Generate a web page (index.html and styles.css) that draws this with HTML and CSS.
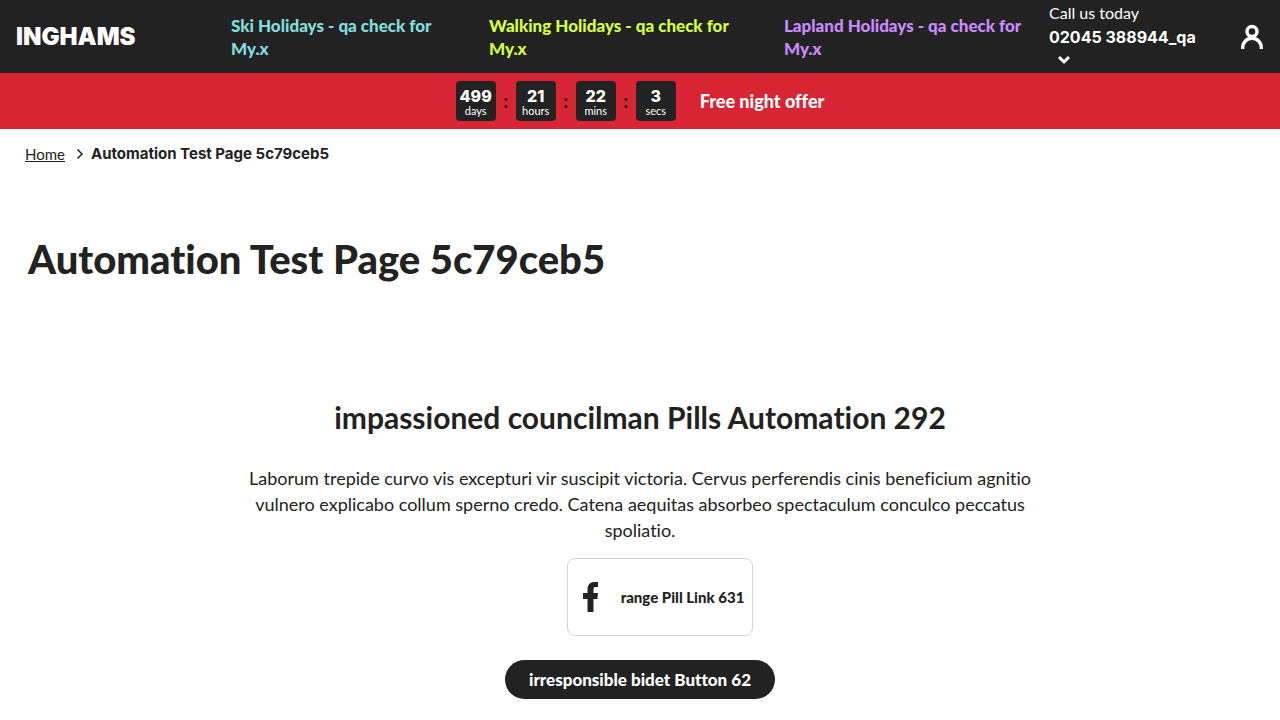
FILE: index.html
```html
<!DOCTYPE html>
<html lang="en">
<head>
<meta charset="utf-8">
<meta name="viewport" content="width=device-width, initial-scale=1">
<title>Automation Test Page 5c79ceb5</title>
<link rel="stylesheet" href="styles.css">
</head>
<body>
<header class="header">
  <a class="logo" href="#">INGHAMS</a>
  <nav class="nav" aria-label="Main">
    <a class="nav-link ski" href="#">Ski Holidays - qa check for My.x</a>
    <a class="nav-link walking" href="#">Walking Holidays - qa check for My.x</a>
    <a class="nav-link lapland" href="#">Lapland Holidays - qa check for My.x</a>
  </nav>
  <div class="contact">
    <span>Call us today</span>
    <button class="phone" type="button">02045 388944_qa
      <svg class="chevron" viewBox="0 0 14 10" aria-hidden="true"><path d="M2 2l5 5 5-5" fill="none" stroke="currentColor" stroke-width="3"/></svg>
    </button>
  </div>
  <button class="account" type="button" aria-label="Account">
    <svg viewBox="0 0 24 26" aria-hidden="true"><g fill="none" stroke="currentColor" stroke-width="3.4"><circle cx="12" cy="7.5" r="5"/><path d="M2.7 25v-1.5a9.3 9.3 0 0 1 18.6 0V25"/></g></svg>
  </button>
</header>
<section class="offer" aria-label="Offer countdown">
  <div class="timer">
    <div class="unit"><strong>499</strong><span>days</span></div><b class="colon">:</b>
    <div class="unit"><strong>21</strong><span>hours</span></div><b class="colon">:</b>
    <div class="unit"><strong>22</strong><span>mins</span></div><b class="colon">:</b>
    <div class="unit"><strong>3</strong><span>secs</span></div>
  </div>
  <strong class="offer-text">Free night offer</strong>
</section>
<main>
  <nav class="crumbs" aria-label="Breadcrumb">
    <a class="crumb-home" href="#">Home</a>
    <svg class="crumb-arrow" viewBox="0 0 8 12" aria-hidden="true"><path d="M1.500 1.500L6 6l-4.500 4.500" fill="none" stroke="currentColor" stroke-width="1.5"/></svg>
    <span class="crumb-current">Automation Test Page 5c79ceb5</span>
  </nav>
  <h1 class="title">Automation Test Page 5c79ceb5</h1>
  <section class="pills">
    <h2 class="pills-title">impassioned councilman Pills Automation 292</h2>
    <p class="pills-text">Laborum trepide curvo vis excepturi vir suscipit victoria. Cervus perferendis cinis beneficium agnitio vulnero explicabo collum sperno credo. Catena aequitas absorbeo spectaculum conculco peccatus spoliatio.</p>
    <a class="pill" href="#">
      <svg class="facebook" viewBox="0 0 16 30" aria-hidden="true"><path d="M4.500 30V17H0v-6h4.500V7.500C4.500 2.500 7.300 0 11.500 0H15v5h-2.500c-1.500 0-2 .8-2 2.200V11H15l-.7 6h-3.800v13z" fill="currentColor"/></svg>
      <span>range Pill Link 631</span>
    </a>
    <a class="button" href="#">irresponsible bidet Button 62</a>
  </section>
</main>
</body>
</html>
```
FILE: styles.css
```css
* { box-sizing: border-box; }
body { margin: 0; color: #222; background: #fff; font: 16px/24px Lato, "Open Sans", sans-serif; font-variant-ligatures: none; }
a { color: inherit; text-decoration: none; }
button { padding: 0; border: 0; background: none; color: inherit; font: inherit; text-align: left; cursor: pointer; }
.header { display: flex; align-items: center; min-height: 73px; padding: 0 16px; background: #222; color: #fff; }
.logo { flex: none; width: 215px; font: 900 24px/28px Inter, sans-serif; }
.nav { display: flex; flex: 1; gap: 48px; font-size: 17px; font-weight: 900; line-height: 23px; }
.nav-link { flex: 0 1 247px; }
.nav-link.ski { flex-basis: 210px; color: #84dede; }
.walking { color: #d7ff3e; }
.lapland { color: #cb8cff; }
.contact { display: flex; flex: none; flex-direction: column; width: 160px; padding-bottom: 3px; }
.phone { font: 700 16px/24px Inter, sans-serif; }
.chevron { display: block; width: 14px; height: 10px; margin: 6px 8px 4px; }
.account { flex: none; width: 24px; height: 26px; margin-left: 31px; }
.account svg { display: block; }
.offer { display: flex; align-items: center; justify-content: center; gap: 24px; padding: 8px; background: #d72534; }
.timer { display: flex; align-items: center; }
.unit { display: flex; flex-direction: column; align-items: center; width: 40px; height: 40px; padding-top: 6px; border-radius: 4px; background: #222; color: #fff; font-size: 11px; line-height: 12px; }
.unit strong { font: 800 16px/18px Inter, sans-serif; }
.colon { width: 20px; font-size: 18px; font-weight: 900; text-align: center; }
.offer-text { color: #fff; font-size: 18px; font-weight: 900; }
.crumbs { display: flex; align-items: center; padding: 13px 25px; font-size: 15px; }
.crumb-home { text-decoration: underline; }
.crumb-arrow { width: 8px; height: 12px; margin: 0 7px 0 11px; }
.crumb-current { font-family: Inter, sans-serif; font-weight: 700; }
.title { margin: 55px 28px 0; font-size: 40px; line-height: 50px; font-weight: 900; }
.pills { display: flex; flex-direction: column; align-items: center; padding: 113px 24px 20px; text-align: center; }
.pills-title { margin: 0; font-size: 30px; line-height: 40px; font-weight: 700; }
.pills-text { max-width: 800px; margin: 28px 0 15px; font-size: 18px; line-height: 26px; }
.pill { display: flex; align-items: center; gap: 22px; min-height: 78px; margin-left: 40px; padding: 0 8px 0 15px; border: 1px solid #d3d3d3; border-radius: 8px; font-size: 15px; font-weight: 900; }
.facebook { width: 16px; height: 30px; }
.button { margin-top: 24px; padding: 8px 24px; border-radius: 20px; background: #222; color: #fff; font-size: 17px; font-weight: 900; line-height: 23px; }
```
